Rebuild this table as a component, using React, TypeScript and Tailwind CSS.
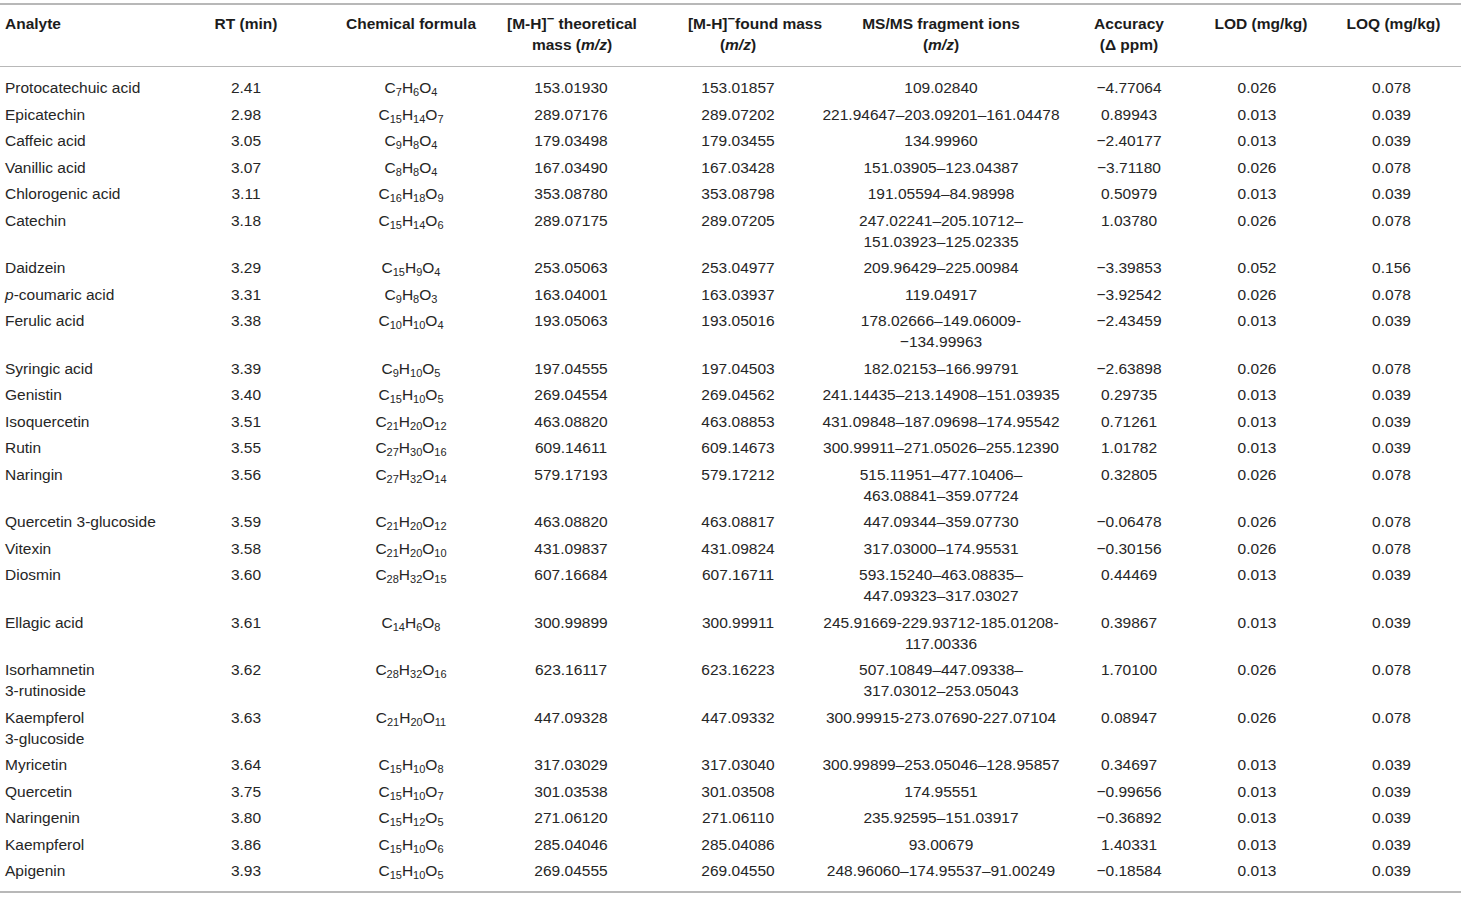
type Row = {
  name: React.ReactNode[];
  rt: string;
  formula: string;
  theo: string;
  found: string;
  frags: string[];
  acc: string;
  lod: string;
  loq: string;
};

const rows: Row[] = [
  { name: ['Protocatechuic acid'], rt: '2.41', formula: 'C7H6O4', theo: '153.01930', found: '153.01857', frags: ['109.02840'], acc: '−4.77064', lod: '0.026', loq: '0.078' },
  { name: ['Epicatechin'], rt: '2.98', formula: 'C15H14O7', theo: '289.07176', found: '289.07202', frags: ['221.94647–203.09201–161.04478'], acc: '0.89943', lod: '0.013', loq: '0.039' },
  { name: ['Caffeic acid'], rt: '3.05', formula: 'C9H8O4', theo: '179.03498', found: '179.03455', frags: ['134.99960'], acc: '−2.40177', lod: '0.013', loq: '0.039' },
  { name: ['Vanillic acid'], rt: '3.07', formula: 'C8H8O4', theo: '167.03490', found: '167.03428', frags: ['151.03905–123.04387'], acc: '−3.71180', lod: '0.026', loq: '0.078' },
  { name: ['Chlorogenic acid'], rt: '3.11', formula: 'C16H18O9', theo: '353.08780', found: '353.08798', frags: ['191.05594–84.98998'], acc: '0.50979', lod: '0.013', loq: '0.039' },
  { name: ['Catechin'], rt: '3.18', formula: 'C15H14O6', theo: '289.07175', found: '289.07205', frags: ['247.02241–205.10712–', '151.03923–125.02335'], acc: '1.03780', lod: '0.026', loq: '0.078' },
  { name: ['Daidzein'], rt: '3.29', formula: 'C15H9O4', theo: '253.05063', found: '253.04977', frags: ['209.96429–225.00984'], acc: '−3.39853', lod: '0.052', loq: '0.156' },
  { name: [<span key="p"><i>p</i>-coumaric acid</span>], rt: '3.31', formula: 'C9H8O3', theo: '163.04001', found: '163.03937', frags: ['119.04917'], acc: '−3.92542', lod: '0.026', loq: '0.078' },
  { name: ['Ferulic acid'], rt: '3.38', formula: 'C10H10O4', theo: '193.05063', found: '193.05016', frags: ['178.02666–149.06009-', '−134.99963'], acc: '−2.43459', lod: '0.013', loq: '0.039' },
  { name: ['Syringic acid'], rt: '3.39', formula: 'C9H10O5', theo: '197.04555', found: '197.04503', frags: ['182.02153–166.99791'], acc: '−2.63898', lod: '0.026', loq: '0.078' },
  { name: ['Genistin'], rt: '3.40', formula: 'C15H10O5', theo: '269.04554', found: '269.04562', frags: ['241.14435–213.14908–151.03935'], acc: '0.29735', lod: '0.013', loq: '0.039' },
  { name: ['Isoquercetin'], rt: '3.51', formula: 'C21H20O12', theo: '463.08820', found: '463.08853', frags: ['431.09848–187.09698–174.95542'], acc: '0.71261', lod: '0.013', loq: '0.039' },
  { name: ['Rutin'], rt: '3.55', formula: 'C27H30O16', theo: '609.14611', found: '609.14673', frags: ['300.99911–271.05026–255.12390'], acc: '1.01782', lod: '0.013', loq: '0.039' },
  { name: ['Naringin'], rt: '3.56', formula: 'C27H32O14', theo: '579.17193', found: '579.17212', frags: ['515.11951–477.10406–', '463.08841–359.07724'], acc: '0.32805', lod: '0.026', loq: '0.078' },
  { name: ['Quercetin 3-glucoside'], rt: '3.59', formula: 'C21H20O12', theo: '463.08820', found: '463.08817', frags: ['447.09344–359.07730'], acc: '−0.06478', lod: '0.026', loq: '0.078' },
  { name: ['Vitexin'], rt: '3.58', formula: 'C21H20O10', theo: '431.09837', found: '431.09824', frags: ['317.03000–174.95531'], acc: '−0.30156', lod: '0.026', loq: '0.078' },
  { name: ['Diosmin'], rt: '3.60', formula: 'C28H32O15', theo: '607.16684', found: '607.16711', frags: ['593.15240–463.08835–', '447.09323–317.03027'], acc: '0.44469', lod: '0.013', loq: '0.039' },
  { name: ['Ellagic acid'], rt: '3.61', formula: 'C14H6O8', theo: '300.99899', found: '300.99911', frags: ['245.91669-229.93712-185.01208-', '117.00336'], acc: '0.39867', lod: '0.013', loq: '0.039' },
  { name: ['Isorhamnetin', '3-rutinoside'], rt: '3.62', formula: 'C28H32O16', theo: '623.16117', found: '623.16223', frags: ['507.10849–447.09338–', '317.03012–253.05043'], acc: '1.70100', lod: '0.026', loq: '0.078' },
  { name: ['Kaempferol', '3-glucoside'], rt: '3.63', formula: 'C21H20O11', theo: '447.09328', found: '447.09332', frags: ['300.99915-273.07690-227.07104'], acc: '0.08947', lod: '0.026', loq: '0.078' },
  { name: ['Myricetin'], rt: '3.64', formula: 'C15H10O8', theo: '317.03029', found: '317.03040', frags: ['300.99899–253.05046–128.95857'], acc: '0.34697', lod: '0.013', loq: '0.039' },
  { name: ['Quercetin'], rt: '3.75', formula: 'C15H10O7', theo: '301.03538', found: '301.03508', frags: ['174.95551'], acc: '−0.99656', lod: '0.013', loq: '0.039' },
  { name: ['Naringenin'], rt: '3.80', formula: 'C15H12O5', theo: '271.06120', found: '271.06110', frags: ['235.92595–151.03917'], acc: '−0.36892', lod: '0.013', loq: '0.039' },
  { name: ['Kaempferol'], rt: '3.86', formula: 'C15H10O6', theo: '285.04046', found: '285.04086', frags: ['93.00679'], acc: '1.40331', lod: '0.013', loq: '0.039' },
  { name: ['Apigenin'], rt: '3.93', formula: 'C15H10O5', theo: '269.04555', found: '269.04550', frags: ['248.96060–174.95537–91.00249'], acc: '−0.18584', lod: '0.013', loq: '0.039' },
];

// column widths follow the midpoints between the reference column centres
const grid = 'grid grid-cols-[180px_148px_163px_164px_185px_195px_159px_131px_136px]';

function Formula({ f }: { f: string }) {
  const parts = f.match(/[A-Z][a-z]?|\d+/g) ?? [];
  return (
    <span>
      {parts.map((p, i) =>
        /\d/.test(p) ? (
          <sub key={i} className="text-[11px] bottom-[-0.3em]">
            {p}
          </sub>
        ) : (
          <span key={i}>{p}</span>
        )
      )}
    </span>
  );
}

function Minus() {
  return <sup className="text-[13px] top-[-0.45em]">−</sup>;
}

export default function App() {
  return (
    <div
      className="w-[1461px] h-[898px] bg-white text-[#262626] text-[15.5px] leading-[21px] pt-[3px]"
      style={{ fontFamily: '"Liberation Sans", Arial, sans-serif' }}
    >
      {/* header */}
      <div className={`${grid} border-t-2 border-b border-[#b8b8b8] pt-[7.5px] pb-[11px] font-bold text-[#1c1c1c] whitespace-nowrap`}>
        <div className="pl-[5px]">Analyte</div>
        <div className="flex flex-col items-center pr-[16px]">RT (min)</div>
        <div className="flex flex-col items-center pl-[3px]">Chemical formula</div>
        <div className="flex flex-col items-center pr-[2px]">
          <span>
            [M-H]<Minus /> theoretical
          </span>
          <span>
            mass (<i>m/z</i>)
          </span>
        </div>
        <div className="flex flex-col items-center pr-[19px]">
          <span className="pl-[34px]">
            [M-H]<Minus />found mass
          </span>
          <span>
            (<i>m/z</i>)
          </span>
        </div>
        <div className="flex flex-col items-center pl-[7px]">
          <span>MS/MS fragment ions</span>
          <span>
            (<i>m/z</i>)
          </span>
        </div>
        <div className="flex flex-col items-center pl-[29px]">
          <span>Accuracy</span>
          <span>(Δ ppm)</span>
        </div>
        <div className="flex flex-col items-center pl-[3px]">LOD (mg/kg)</div>
        <div className="flex flex-col items-center pl-[1px]">LOQ (mg/kg)</div>
      </div>

      {/* body */}
      <div className="border-b-2 border-[#b8b8b8] pt-[7.75px] pb-[7.5px] whitespace-nowrap">
        {rows.map((r, i) => (
          <div key={i} className={`${grid} py-[2.75px]`}>
            <div className="pl-[5px] flex flex-col">
              {r.name.map((n, j) => (
                <span key={j}>{n}</span>
              ))}
            </div>
            <div className="flex flex-col items-center pr-[16px]">{r.rt}</div>
            <div className="flex flex-col items-center pl-[3px]">
              <Formula f={r.formula} />
            </div>
            <div className="flex flex-col items-center pr-[4px]">{r.theo}</div>
            <div className="flex flex-col items-center pr-[19px]">{r.found}</div>
            <div className="flex flex-col items-center pl-[7px]">
              {r.frags.map((t, j) => (
                <span key={j}>{t}</span>
              ))}
            </div>
            <div className="flex flex-col items-center pl-[29px]">{r.acc}</div>
            <div className="flex flex-col items-center pr-[5px]">{r.lod}</div>
            <div className="flex flex-col items-center pr-[3px]">{r.loq}</div>
          </div>
        ))}
      </div>
    </div>
  );
}
